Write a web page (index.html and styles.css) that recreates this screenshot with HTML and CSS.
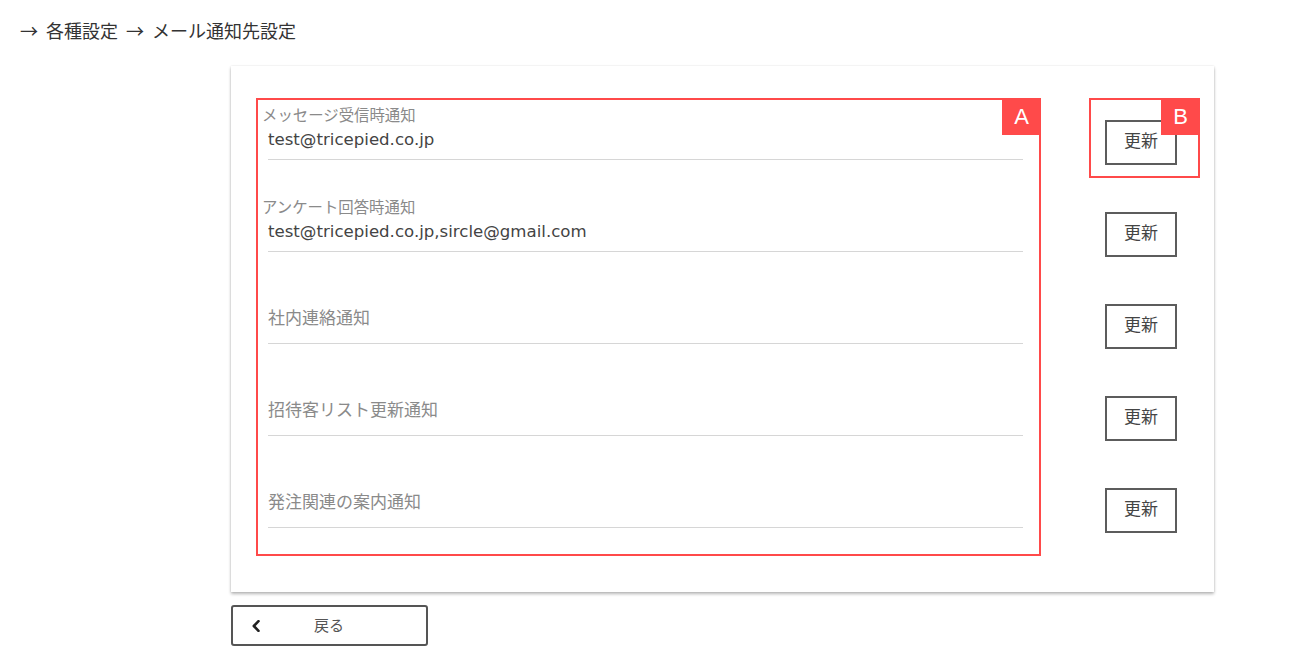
FILE: index.html
```html
<!DOCTYPE html>
<html lang="ja">
<head>
<meta charset="utf-8">
<title>メール通知先設定</title>
<link rel="stylesheet" href="styles.css">
</head>
<body>
<div class="crumb">→ 各種設定 → メール通知先設定</div>
<div class="card">
  <div class="fields">
    <span class="tag">A</span>
    <div class="field">
      <div class="input">
        <div class="label">メッセージ受信時通知</div>
        <div class="value">test@tricepied.co.jp</div>
      </div>
    </div>
    <div class="field">
      <div class="input">
        <div class="label">アンケート回答時通知</div>
        <div class="value">test@tricepied.co.jp,sircle@gmail.com</div>
      </div>
    </div>
    <div class="field">
      <div class="input"><div class="placeholder">社内連絡通知</div></div>
    </div>
    <div class="field">
      <div class="input"><div class="placeholder">招待客リスト更新通知</div></div>
    </div>
    <div class="field">
      <div class="input"><div class="placeholder">発注関連の案内通知</div></div>
    </div>
  </div>
  <div class="actions">
    <div class="bwrap marked"><span class="tag">B</span><button class="btn">更新</button></div>
    <div class="bwrap"><button class="btn">更新</button></div>
    <div class="bwrap"><button class="btn">更新</button></div>
    <div class="bwrap"><button class="btn">更新</button></div>
    <div class="bwrap"><button class="btn">更新</button></div>
  </div>
</div>
<button class="back">
  <svg class="chev" width="10" height="12" viewBox="0 0 10 12"><path d="M7.5 1.2 L2.8 6 L7.5 10.8" fill="none" stroke="#222" stroke-width="2.6" stroke-linecap="round" stroke-linejoin="round"/></svg>
  <span class="back-text">戻る</span>
</button>
</body>
</html>
```
FILE: styles.css
```css
* { box-sizing: border-box; }
body {
  margin: 0;
  background: #fff;
  font-family: "DejaVu Sans", "Noto Sans CJK JP", sans-serif;
  color: #333;
}
.crumb {
  padding: 20px 0 0 20px;
  font-size: 18px;
  line-height: 20px;
  color: #333;
  word-spacing: 4px;
  font-family: "Noto Sans CJK JP", sans-serif;
}
.card {
  margin: 26px 0 0 231px;
  width: 983px;
  height: 526px;
  padding: 32px 14px 36px 25px;
  display: flex;
  align-items: flex-start;
  background: #fff;
  box-shadow: 0 2px 3px rgba(0,0,0,0.28), 0 0 2px rgba(0,0,0,0.10);
}
.fields {
  position: relative;
  width: 785px;
  border: 2px solid #ff4a4a;
  padding-bottom: 26px;
  display: flex;
  flex-direction: column;
  gap: 32px;
}
.tag {
  position: absolute;
  top: -2px;
  right: -2px;
  width: 39px;
  height: 37px;
  background: #ff4a4a;
  color: #fff;
  font-family: "Liberation Sans", sans-serif;
  font-size: 22px;
  line-height: 37px;
  text-align: center;
}
.field { height: 60px; }
.input {
  height: 60px;
  margin: 0 16px 0 10px;
  border-bottom: 1px solid #d6d6d6;
}
.label {
  margin-left: -6px;
  padding-top: 6px;
  font-family: "Noto Sans CJK JP", sans-serif;
  font-size: 15.4px;
  line-height: 16px;
  color: #8a8a8a;
}
.value {
  margin-top: 6px;
  font-size: 16.6px;
  line-height: 24px;
  color: #444;
}
.placeholder {
  padding-top: 21px;
  font-family: "Noto Sans CJK JP", sans-serif;
  font-size: 17px;
  line-height: 24px;
  color: #8a8a8a;
}
.actions {
  margin-left: 48px;
  width: 111px;
  display: flex;
  flex-direction: column;
  gap: 12px;
}
.bwrap {
  position: relative;
  height: 80px;
  border: 2px solid transparent;
  padding: 20px 0 0 14px;
}
.bwrap.marked { border-color: #ff4a4a; }
.btn {
  display: block;
  width: 72px;
  height: 45px;
  padding: 0 0 5px;
  border: 2px solid #5c5c5c;
  background: #fff;
  color: #444;
  font-family: "Noto Sans CJK JP", sans-serif;
  font-size: 17px;
  line-height: 20px;
}
.back {
  display: flex;
  align-items: center;
  margin: 13px 0 0 231px;
  width: 197px;
  height: 41px;
  padding: 0 0 2px 18px;
  border: 2px solid #555;
  border-radius: 3px;
  background: #fff;
}
.chev { display: block; margin-top: 2px; }
.back-text {
  margin-left: 53px;
  font-family: "Noto Sans CJK JP", sans-serif;
  font-size: 15px;
  color: #555;
}
```
